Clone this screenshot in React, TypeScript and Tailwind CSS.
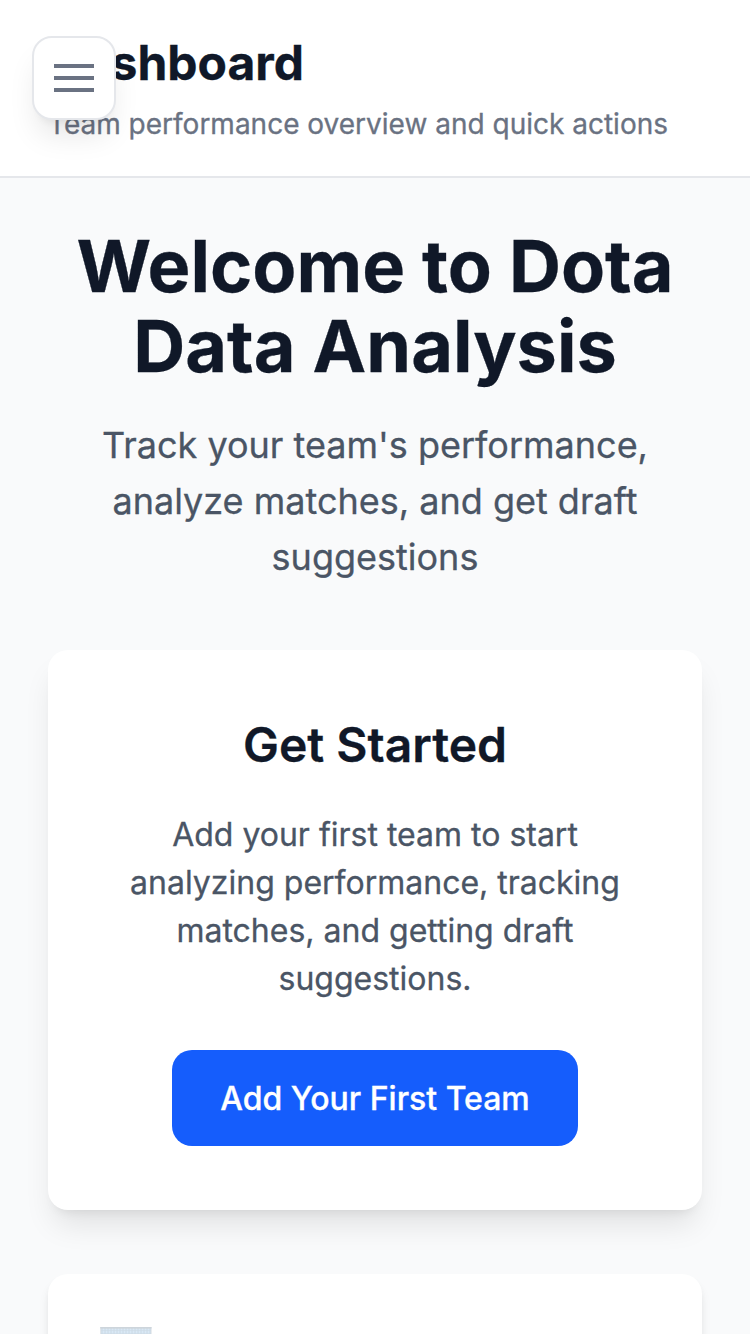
import React from "react";

function MenuButton() {
  return (
    <button
      aria-label="Open menu"
      className="fixed left-8 top-9 z-50 flex size-[84px] items-center justify-center rounded-[20px] border-2 border-gray-200 bg-white shadow-[0_20px_30px_-6px_rgba(0,0,0,0.1),0_8px_12px_-8px_rgba(0,0,0,0.1)]"
    >
      <span className="flex w-10 flex-col gap-2">
        <span className="h-1 bg-gray-500" />
        <span className="h-1 bg-gray-500" />
        <span className="h-1 bg-gray-500" />
      </span>
    </button>
  );
}

function ChartIcon() {
  const columns = Array.from({ length: 17 }, (_, i) => 2 + i * 3);
  const rows = Array.from({ length: 17 }, (_, i) => 3.5 + i * 3);
  return (
    <svg width="52" height="52" viewBox="0 0 52 52" aria-hidden="true">
      <rect x="0.3" width="51.2" height="52" fill="#d6dce1" />
      <rect x="1.2" y="1.5" width="49.4" height="49" fill="#d9e8f5" />
      {columns.map((x) => (
        <path key={x} d={`M${x} 1V51`} stroke="#c8d5e0" strokeWidth="0.8" />
      ))}
      {rows.map((y) => (
        <path key={y} d={`M1 ${y}H51`} stroke="#cddae5" strokeWidth="0.6" />
      ))}
      <path d="M.3 .75H51.5" stroke="#cdd5dc" strokeWidth="1.5" />
    </svg>
  );
}

export default function App() {
  return (
    <div className="h-[1334px] overflow-hidden bg-gray-50 font-['Inter',sans-serif] text-gray-900 [-webkit-text-stroke:0.3px]">
      <MenuButton />
      <header className="border-b-2 border-gray-200 bg-white px-12 pb-8 pt-[31px]">
        <h1 className="text-[48px] font-bold leading-[64px]">Dashboard</h1>
        <p className="mt-[9px] text-[28px] leading-[40px] text-gray-500">
          Team performance overview and quick actions
        </p>
      </header>
      <main className="flex flex-col gap-16 p-12">
        <section className="pb-px text-center">
          <h2 className="text-[72px] font-bold leading-[80px]">Welcome to Dota Data Analysis</h2>
          <p className="mt-[31px] text-[36px] leading-[56px] text-gray-600">
            Track your team's performance, analyze matches, and get draft suggestions
          </p>
        </section>
        <section className="rounded-[20px] bg-white px-16 pb-16 pt-[63px] text-center shadow-[0_20px_30px_-6px_rgba(0,0,0,0.1),0_8px_12px_-8px_rgba(0,0,0,0.1)]">
          <h3 className="text-[48px] font-semibold leading-[64px]">Get Started</h3>
          <p className="mt-[34px] text-[32px] leading-[48px] text-gray-600">
            Add your first team to start analyzing performance, tracking matches, and getting draft
            suggestions.
          </p>
          <button className="mt-[47px] h-24 rounded-[20px] bg-[#155dfc] px-12 pt-0.5 text-[32px] font-medium leading-[48px] text-white">
            Add Your First Team
          </button>
        </section>
        <section className="h-80 rounded-[20px] bg-white px-[52px] pt-[53px] shadow-[0_8px_12px_-2px_rgba(0,0,0,0.1),0_4px_8px_-4px_rgba(0,0,0,0.1)]">
          <ChartIcon />
        </section>
      </main>
    </div>
  );
}
